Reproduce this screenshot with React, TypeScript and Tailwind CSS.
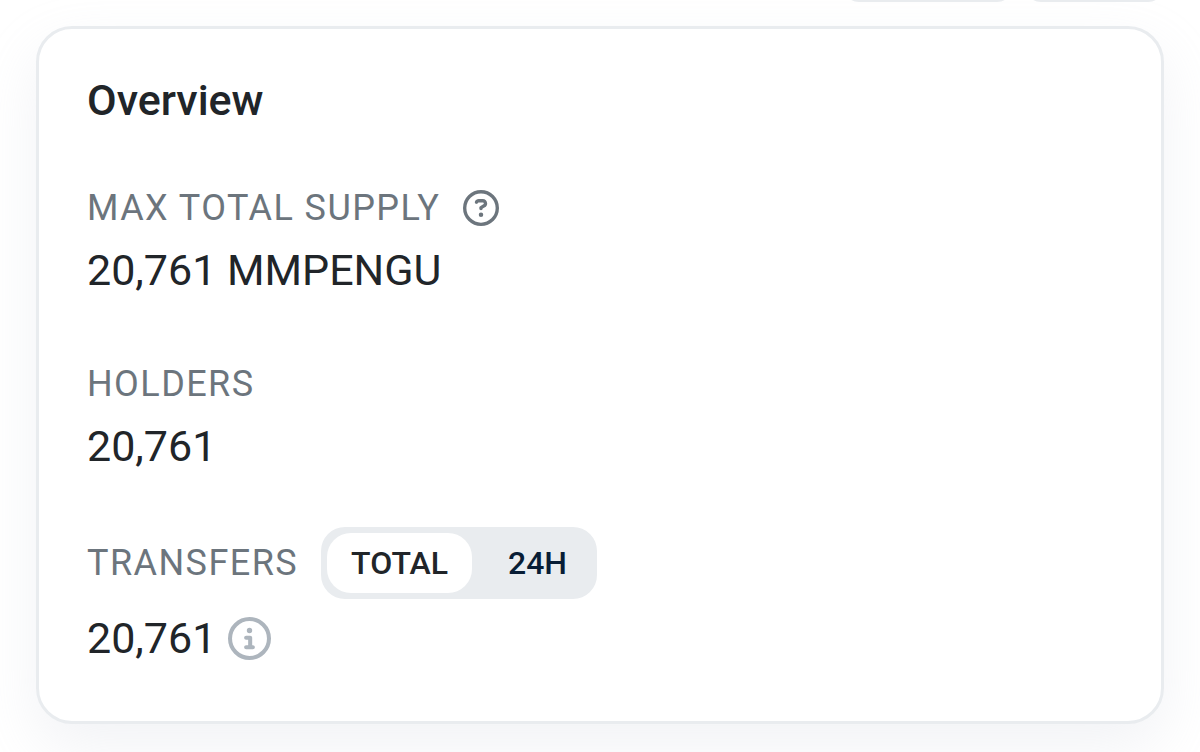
import { useState } from "react";
import { FaRegCircleQuestion } from "react-icons/fa6";

function InfoIcon() {
  return (
    <svg viewBox="0 0 512 512" className="size-[43px]" fill="currentColor" aria-hidden="true">
      <circle cx="256" cy="256" r="232" fill="none" stroke="currentColor" strokeWidth="48" />
      <path d="M216 336h24V272H216c-13.3 0-24-10.7-24-24s10.7-24 24-24h48c13.3 0 24 10.7 24 24v88h8c13.3 0 24 10.7 24 24s-10.7 24-24 24H216c-13.3 0-24-10.7-24-24s10.7-24 24-24zm40-208a32 32 0 1 1 0 64 32 32 0 1 1 0-64z" />
    </svg>
  );
}

const labelClass = "text-[36px] leading-[50px] tracking-[0.04em] font-normal uppercase text-[#6c757d]";
const valueClass = "flex items-center gap-3 text-[43px] leading-[46px]";

const ranges = ["Total", "24h"] as const;

export default function App() {
  const [range, setRange] = useState<(typeof ranges)[number]>("Total");

  return (
    <main className="min-h-screen overflow-hidden bg-white px-9 font-[Roboto,sans-serif] text-[#212529]">
      <div className="flex h-[2px] items-end justify-end gap-3 overflow-hidden" aria-hidden="true">
        <div className="h-16 w-[170px] shrink-0 rounded-2xl bg-[#e9ecef]" />
        <div className="h-16 w-[139px] shrink-0 rounded-2xl bg-[#e9ecef]" />
      </div>

      <section className="mt-6 rounded-[36px] border-3 border-[#e9ecef] bg-white px-12 pt-12 pb-[60px] shadow-[0_24px_58px_rgba(189,197,209,0.2)]">
        <h1 className="text-[43px] leading-[46px] font-medium">Overview</h1>

        <div className="mt-[60px] flex flex-col gap-[14px]">
          <div className="flex items-center gap-[23px]">
            <h2 className={labelClass}>Max Total Supply</h2>
            <button type="button" aria-label="About max total supply" className="text-[#6c757d]">
              <FaRegCircleQuestion className="size-9" />
            </button>
          </div>
          <p className={valueClass}>20,761 MMPENGU</p>
        </div>

        <div className="mt-[66px] flex flex-col gap-[14px]">
          <h2 className={labelClass}>Holders</h2>
          <p className={valueClass}>20,761</p>
        </div>

        <div className="mt-[58px] flex flex-col gap-4">
          <div className="flex items-center gap-[23px]">
            <h2 className={labelClass}>Transfers</h2>
            <div className="flex h-[72px] rounded-3xl bg-[#e9ecef] p-[6px]">
              {ranges.map((name) => (
                <button
                  key={name}
                  type="button"
                  aria-pressed={range === name}
                  onClick={() => setRange(name)}
                  className={
                    range === name
                      ? "rounded-3xl bg-white px-6 text-[32px] leading-[48px] font-medium uppercase text-[#212529]"
                      : "ml-3 rounded-3xl px-6 text-[32px] leading-[48px] font-medium uppercase text-[#081d35]"
                  }
                >
                  {name}
                </button>
              ))}
            </div>
          </div>
          <p className={valueClass}>
            20,761
            <button type="button" aria-label="About transfers" className="text-[#adb5bd]">
              <InfoIcon />
            </button>
          </p>
        </div>
      </section>
    </main>
  );
}
